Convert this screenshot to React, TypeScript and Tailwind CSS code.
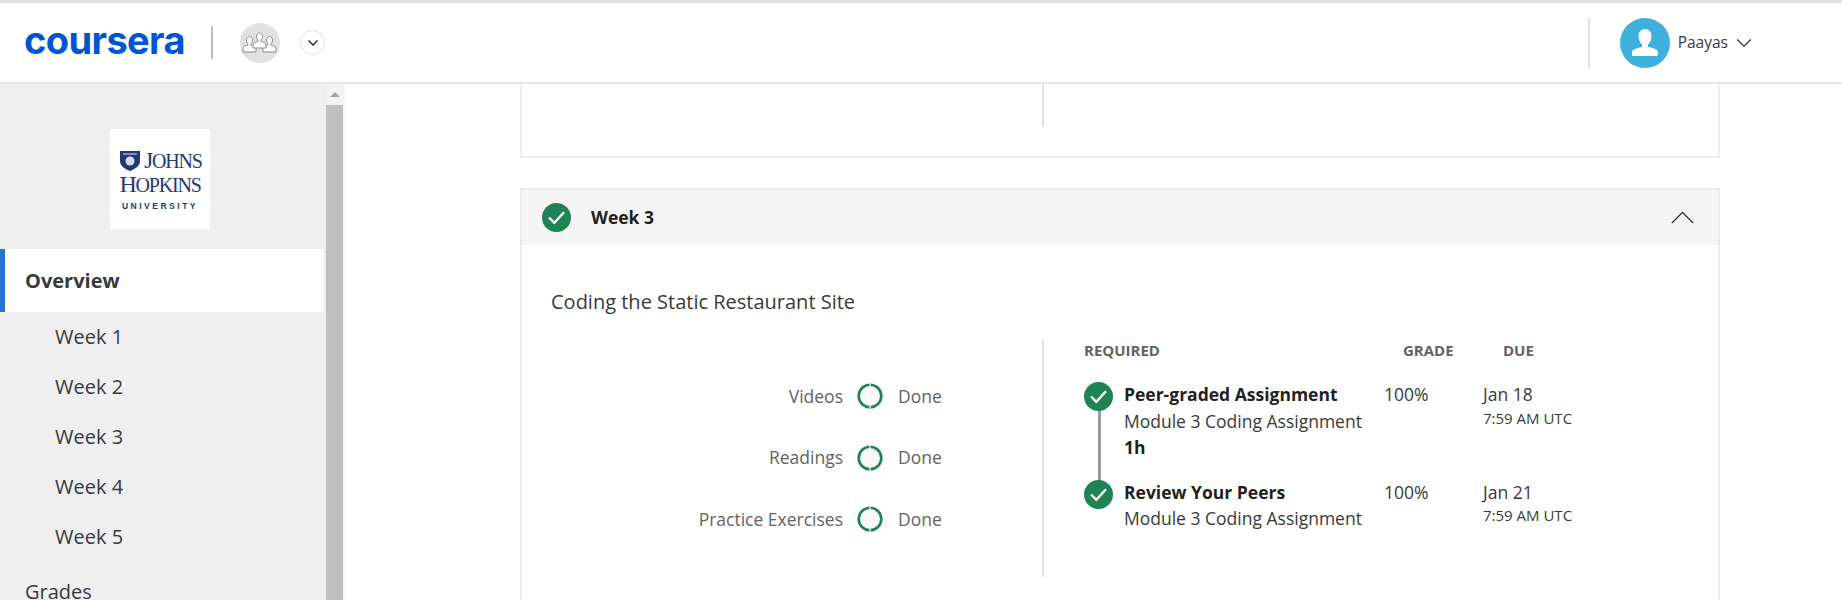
import { ChevronDown, ChevronUp } from "lucide-react";

const weeks = ["Week 1", "Week 2", "Week 3", "Week 4", "Week 5"];
const progress = ["Videos", "Readings", "Practice Exercises"];

function CheckBadge() {
  return (
    <div className="w-[29px] h-[29px] rounded-full bg-[#1f8354] flex items-center justify-center shrink-0">
      <svg width="17" height="17" viewBox="0 0 17 17" fill="none">
        <path d="M1 8.500L6.300 13.800L16 3.300" stroke="#fff" strokeWidth="2.300" />
      </svg>
    </div>
  );
}

function Ring() {
  return (
    <svg width="26" height="26" viewBox="0 0 26 26" className="shrink-0 block">
      <circle cx="13" cy="13" r="11.3" fill="#f9f9f9" stroke="#1f8354" strokeWidth="2.6" />
      <rect x="12.4" y="0" width="1.2" height="3.5" fill="#f9f9f9" />
      <rect x="12.4" y="22.5" width="1.2" height="3.5" fill="#f9f9f9" />
    </svg>
  );
}

function GroupIcon() {
  return (
    <svg width="36" height="22" viewBox="0 0 36 22" fill="#fff" stroke="#8a8a8a" strokeWidth="1">
      <path d="M1 20v-3.5c0-2 3-3 5-3.5v-1.500c-1-.7-1.500-2-1.500-3.500 0-2 1.200-3.500 3-3.500s3 1.500 3 3.500c0 1.500-.5 2.800-1.500 3.500V13c2 .5 5 1.500 5 3.500V20z" />
      <path d="M21 20v-3.500c0-2 3-3 5-3.500v-1.500c-1-.7-1.500-2-1.500-3.500 0-2 1.200-3.500 3-3.500s3 1.500 3 3.500c0 1.500-.5 2.800-1.500 3.500V13c2 .5 5 1.500 5 3.500V20z" />
      <path d="M11 16v-3c0-2 3-3 5-3.500V8c-1-.7-1.500-2-1.500-3.500 0-2 1.200-3.500 3-3.500s3 1.500 3 3.500c0 1.500-.5 2.800-1.500 3.500v1.500c2 .5 5 1.500 5 3.500v3z" />
    </svg>
  );
}

function Header() {
  return (
    <header className="h-[84px] shrink-0 bg-white border-t-[3px] border-t-[#e1e1e6] border-b-2 border-b-[#e5e5e5] flex items-center pl-[24px]">
      <span className="w-[161px] text-[#0056d2] text-[38px] leading-none font-bold tracking-[-0.6px] font-['Inter',sans-serif] pb-[5px]">
        coursera
      </span>
      <div className="ml-[26px] w-[2px] h-[33px] bg-[#bdbdbd]" />
      <div className="ml-[27px] w-10 h-10 rounded-full bg-[#e1e1e1] flex items-center justify-center">
        <GroupIcon />
      </div>
      <div className="ml-5 w-[25px] h-[25px] rounded-full border border-[#e1e1e1] flex items-center justify-center">
        <ChevronDown size={16} strokeWidth={2.5} className="text-[#333]" />
      </div>
      <div className="ml-auto w-[2px] h-[50px] bg-[#e1e1e1]" />
      <div className="ml-[30px] w-[50px] h-[50px] rounded-full bg-[#3eb0dc] overflow-hidden flex items-center justify-center">
        <svg width="30" height="30" viewBox="0 0 30 30" fill="#fff">
          <path d="M15 1c-4 0-6.500 3-6.500 7 0 3.500 1.500 7 3.500 8.500V19c-3 .7-9 1.500-10 4.500V28h26v-4.500c-1-3-7-3.800-10-4.500v-2.500c2-1.500 3.500-5 3.500-8.500 0-4-2.500-7-6.500-7z" />
        </svg>
      </div>
      <span className="ml-2 text-[15.500px] text-[#373a4a]">Paayas</span>
      <ChevronDown size={26} strokeWidth={1} className="ml-[3px] mr-[85px] text-[#333]" />
    </header>
  );
}

function JhuLogo() {
  return (
    <div className="w-[100px] h-[100px] bg-white flex flex-col items-center justify-center text-[#1f3a75] font-['Liberation_Serif',serif] pt-[2px]">
      <div className="flex items-center gap-[4px] leading-none ml-[2px]">
        <svg width="20" height="21" viewBox="0 0 20 21">
          <path d="M0 1h20v10c0 5-5 8-10 10C5 19 0 16 0 11z" fill="#1f3a75" />
          <circle cx="10" cy="11" r="4.500" fill="#d8dcea" />
          <path d="M3 3h14v2H3z" fill="#7f8db5" />
        </svg>
        <span className="text-[23px] tracking-[-1.2px]">J<span className="text-[20px]">OHNS</span></span>
      </div>
      <span className="text-[24px] leading-[24px] tracking-[-1.2px]">H<span className="text-[20px]">OPKINS</span></span>
      <span className="mt-[3px] text-[8.500px] leading-[12px] font-bold tracking-[2.500px] font-['Liberation_Sans',sans-serif]">
        UNIVERSITY
      </span>
    </div>
  );
}

function Sidebar() {
  return (
    <aside className="w-[345px] shrink-0 flex overflow-hidden">
      <div className="w-[326px] bg-[#efefef] flex flex-col">
        <div className="pt-[45px] pb-5 flex justify-center pr-[6px]">
          <JhuLogo />
        </div>
        <div className="w-[324px] h-[63px] shrink-0 bg-white border-l-[5px] border-l-[#2a73cc] flex items-center pl-5 text-[20px] font-bold text-[#373a3c]">
          Overview
        </div>
        {weeks.map((w) => (
          <div key={w} className="h-[50px] shrink-0 flex items-center pl-[55px] text-[20px] text-[#373a3c]">
            {w}
          </div>
        ))}
        <div className="h-[60px] shrink-0 flex items-center pl-[25px] text-[20px] text-[#373a3c]">Grades</div>
      </div>
      <div className="w-[19px] bg-[#f3f3f3] flex flex-col">
        <div className="h-[21px] shrink-0 flex items-center justify-center pr-[2px]">
          <div className="w-0 h-0 border-x-[5px] border-x-transparent border-b-[5px] border-b-[#a3a3a3]" />
        </div>
        <div className="w-[17px] flex-1 bg-[#c0c0c0]" />
      </div>
    </aside>
  );
}

function ItemRow({ title, sub, extra, date }: { title: string; sub: string; extra?: string; date: string }) {
  return (
    <div className="flex">
      <div className="w-[260px] flex flex-col leading-[26.500px] text-[17.500px] text-[#1f1f1f]">
        <span className="font-bold">{title}</span>
        <span className="text-[#373a3c]">{sub}</span>
        {extra && <span className="font-bold">{extra}</span>}
      </div>
      <div className="w-[99px] text-[17.500px] leading-[26.500px] text-[#373a3c]">100%</div>
      <div className="flex flex-col text-[#373a3c]">
        <span className="text-[17.500px] leading-[26.500px]">{date}</span>
        <span className="text-[15px] leading-[20px]">7:59 AM UTC</span>
      </div>
    </div>
  );
}

function WeekCard() {
  return (
    <section className="mt-[30px] border-2 border-[#ececec] border-b-0 h-[500px]">
      <div className="h-[55px] bg-[#f5f5f5] flex items-center pl-[20px] pr-[15px]">
        <CheckBadge />
        <span className="ml-[20px] text-[17.500px] font-bold text-[#1f1f1f]">Week 3</span>
        <ChevronUp size={41} strokeWidth={0.8} className="ml-auto text-[#1f1f1f]" />
      </div>
      <h2 className="mt-[43px] ml-[29px] text-[20px] leading-[28px] text-[#373a3c]">Coding the Static Restaurant Site</h2>
      <div className="mt-[24px] flex">
        <div className="w-[522px] h-[237px] border-r-2 border-r-[#e1e1e1] flex flex-col gap-[35.500px] pt-[43px] pr-[100px]">
          {progress.map((p) => (
            <div key={p} className="flex items-center justify-end h-[26px] text-[17.500px] text-[#636363]">
              <span>{p}</span>
              <span className="ml-[14px]"><Ring /></span>
              <span className="ml-[15px] w-[44px]">Done</span>
            </div>
          ))}
        </div>
        <div className="pl-[40px]">
          <div className="flex text-[15px] font-bold text-[#636363] leading-[20px]">
            <span className="w-[319px]">REQUIRED</span>
            <span className="w-[100px]">GRADE</span>
            <span>DUE</span>
          </div>
          <div className="relative mt-[21px] flex flex-col gap-[18px] pl-[40px]">
            <div className="absolute left-[14px] top-[16px] w-[3px] h-[84px] bg-[#999]" />
            <div className="absolute left-[0px] top-[1px]"><CheckBadge /></div>
            <div className="absolute left-[0px] top-[99px]"><CheckBadge /></div>
            <ItemRow title="Peer-graded Assignment" sub="Module 3 Coding Assignment" extra="1h" date="Jan 18" />
            <ItemRow title="Review Your Peers" sub="Module 3 Coding Assignment" date="Jan 21" />
          </div>
        </div>
      </div>
    </section>
  );
}

export default function App() {
  return (
    <div className="w-[1842px] h-[600px] overflow-hidden bg-white flex flex-col font-['Open_Sans',sans-serif]">
      <Header />
      <div className="flex flex-1 min-h-0">
        <Sidebar />
        <main className="flex-1 pl-[175px] pr-[122px]">
          <section className="h-[74px] border-2 border-t-0 border-[#ececec] flex">
            <div className="w-[522px] h-[43px] border-r-2 border-r-[#e1e1e1]" />
          </section>
          <WeekCard />
        </main>
      </div>
    </div>
  );
}
